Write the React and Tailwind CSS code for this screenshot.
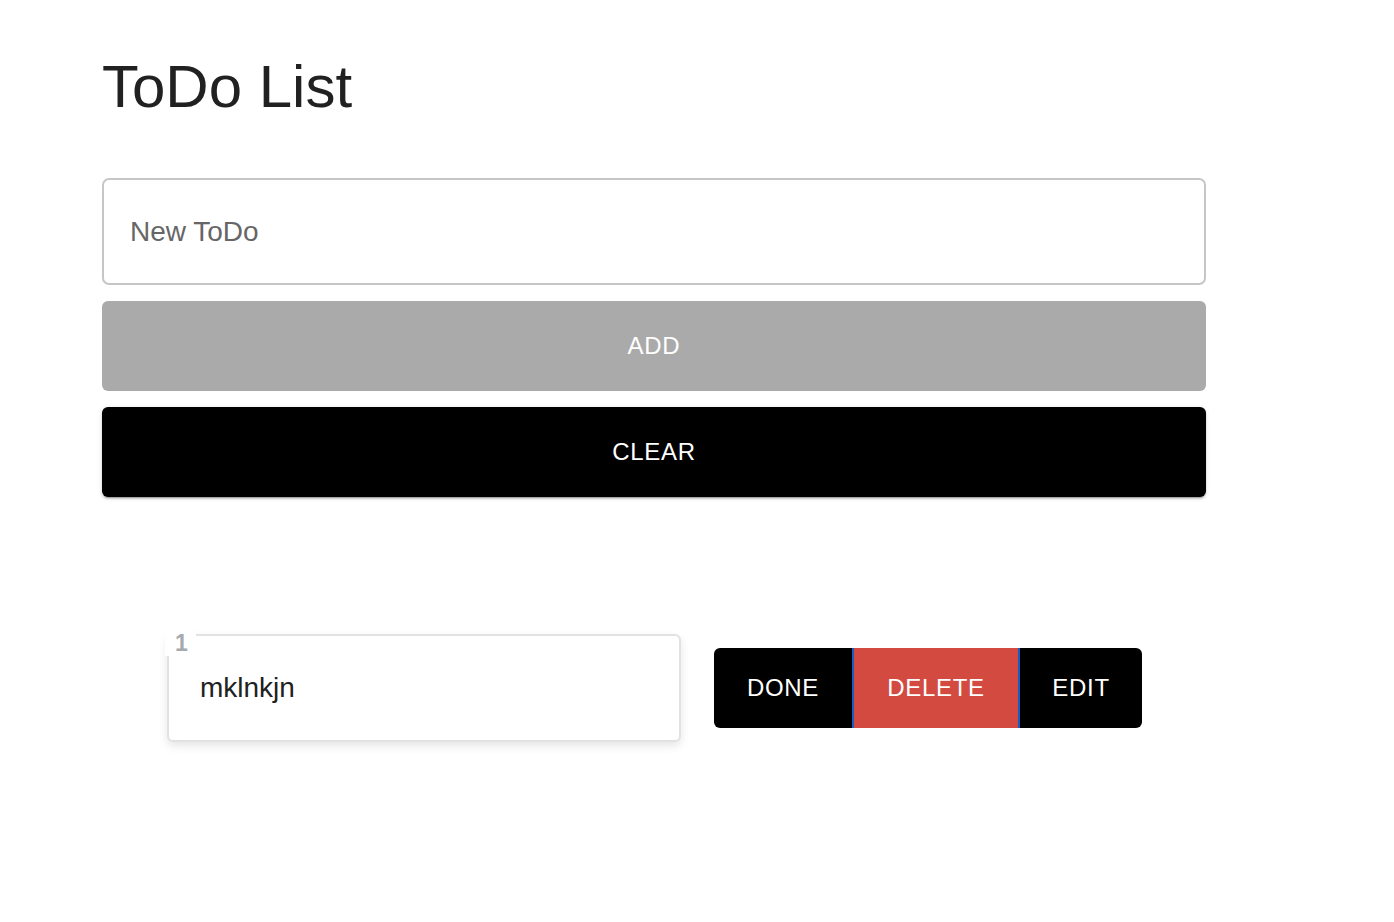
import React from "react";

export default function App() {
  const font = { fontFamily: '"Liberation Sans", Arial, Helvetica, sans-serif' };
  return (
    <div className="min-h-[922px] w-full bg-white text-[#212121]" style={font}>
      <div className="pl-[102px] pt-[51px] w-[1206px]">
        <h1 className="text-[60px] leading-[72px] font-normal tracking-[0px] text-[#212121]">ToDo List</h1>

        <div className="mt-[55px] flex flex-col gap-[16px]">
          <div className="h-[107px] w-full rounded-[7px] border-2 border-[#c6c6c6] flex items-center pl-[26px]">
            <span className="text-[28px] text-[#666666]">New ToDo</span>
          </div>
          <div className="h-[90px] w-full rounded-[6px] bg-[#aaaaaa] flex items-center justify-center">
            <span className="text-[24px] tracking-[0.03em] text-white">ADD</span>
          </div>
          <div className="h-[90px] w-full rounded-[6px] bg-black flex items-center justify-center shadow-[0_3px_1px_-2px_rgba(0,0,0,0.2),0_2px_2px_0_rgba(0,0,0,0.14),0_1px_5px_0_rgba(0,0,0,0.12)]">
            <span className="text-[24px] tracking-[0.03em] text-white">CLEAR</span>
          </div>
        </div>

        <div className="mt-[137px] ml-[65px] flex items-center gap-[33px]">
          <div className="relative h-[108px] w-[514px] rounded-[6px] border-2 border-[#e2e2e2] bg-white flex items-center pl-[31px] shadow-[0_4px_10px_rgba(0,0,0,0.10)]">
            <div className="absolute left-[-4px] top-[-6px] h-[26px] w-[31px] bg-white flex items-start justify-start pl-[10px]">
              <span className="text-[23px] leading-[26px] font-bold text-[#a6a9ad]">1</span>
            </div>
            <span className="text-[28px] text-[#212121]">mklnkjn</span>
          </div>

          <div className="flex h-[80px] rounded-[6px] overflow-hidden">
            <div className="h-full w-[138px] bg-black flex items-center justify-center">
              <span className="text-[24px] tracking-[0.03em] text-white">DONE</span>
            </div>
            <div className="h-full w-[166px] bg-[#d34a41] border-l-2 border-[#1c5cc0] flex items-center justify-center">
              <span className="text-[24px] tracking-[0.03em] text-white">DELETE</span>
            </div>
            <div className="h-full w-[124px] bg-black border-l-2 border-[#1c5cc0] flex items-center justify-center">
              <span className="text-[24px] tracking-[0.03em] text-white">EDIT</span>
            </div>
          </div>
        </div>
      </div>
    </div>
  );
}
